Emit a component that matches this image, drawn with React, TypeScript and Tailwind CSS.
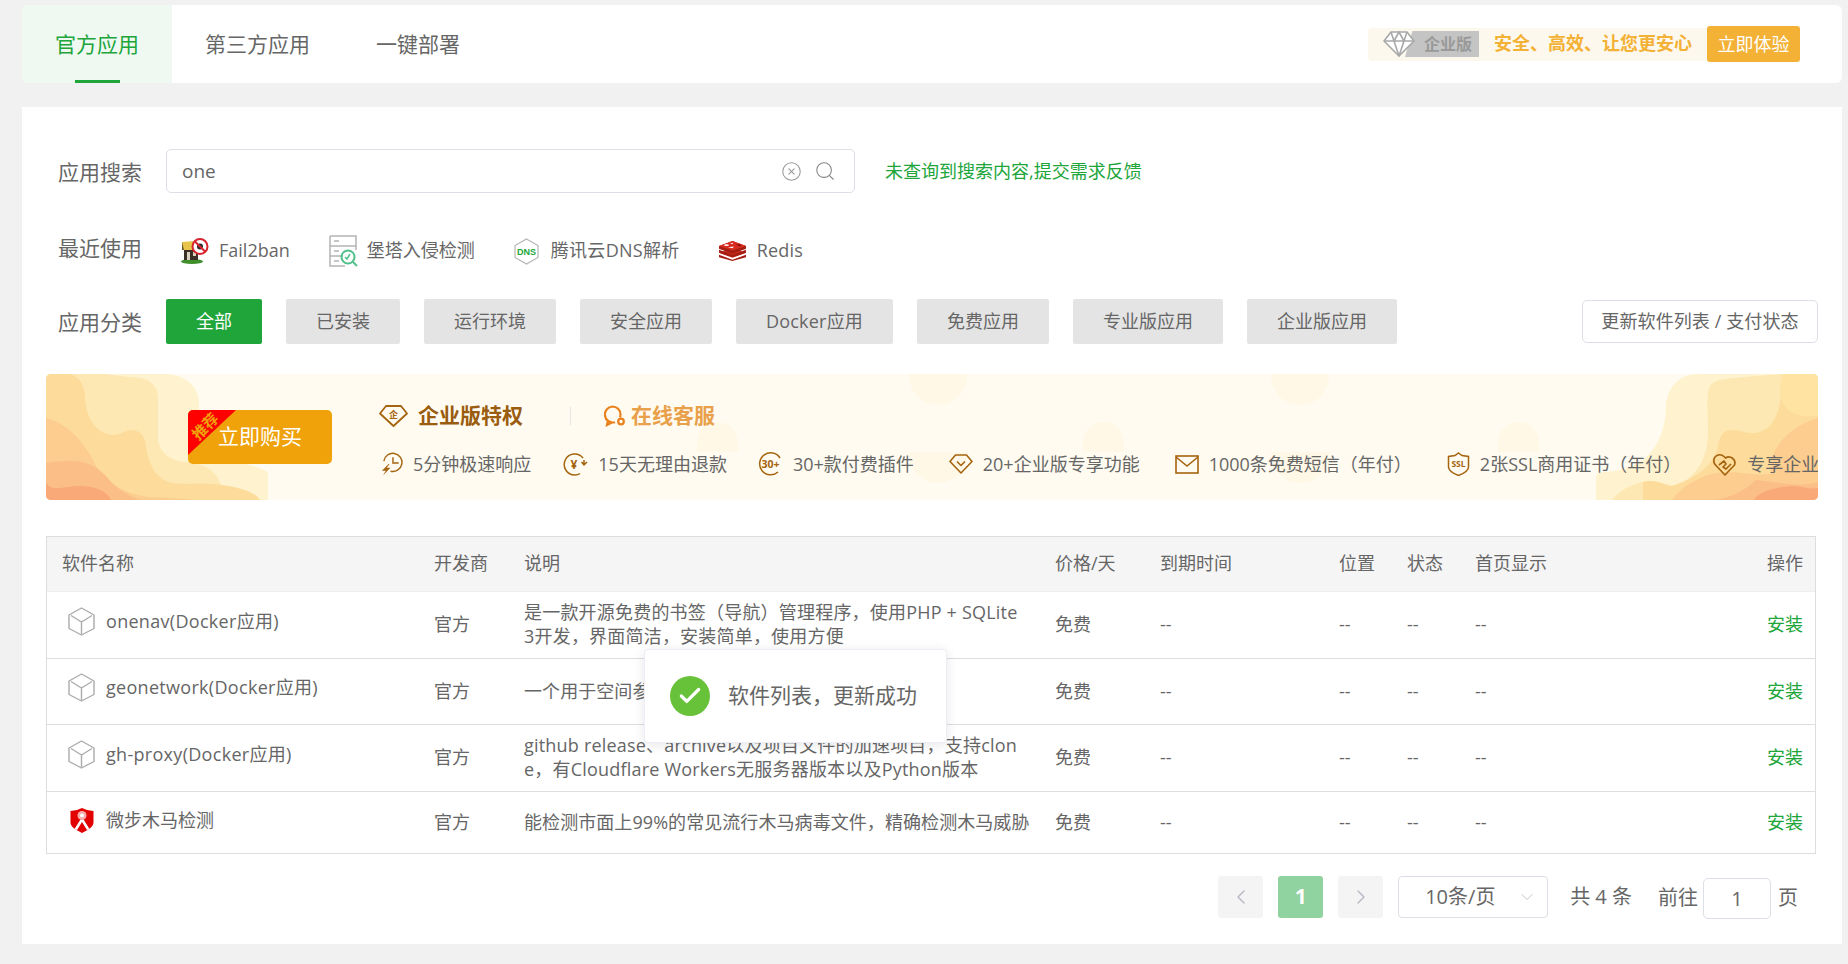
import { CircleX, Search, ChevronLeft, ChevronRight, ChevronDown, Check } from "lucide-react";

const categories = ["已安装", "运行环境", "安全应用", "Docker应用", "免费应用", "专业版应用", "企业版应用"];

const rows = [
  {
    name: "onenav(Docker应用)",
    desc: ["是一款开源免费的书签（导航）管理程序，使用PHP + SQLite", "3开发，界面简洁，安装简单，使用方便"],
    h: "h-[67px]",
  },
  {
    name: "geonetwork(Docker应用)",
    desc: ["一个用于空间参考信息管理的开源地理信息目录系统"],
    h: "h-[66px]",
  },
  {
    name: "gh-proxy(Docker应用)",
    desc: ["github release、archive以及项目文件的加速项目，支持clon", "e，有Cloudflare Workers无服务器版本以及Python版本"],
    h: "h-[67px]",
  },
  {
    name: "微步木马检测",
    desc: ["能检测市面上99%的常见流行木马病毒文件，精确检测木马威胁"],
    h: "h-[62px]",
    red: true,
  },
];

const headers = [
  { t: "软件名称", w: "w-[372px]" },
  { t: "开发商", w: "w-[90px]" },
  { t: "说明", w: "w-[531px]" },
  { t: "价格/天", w: "w-[105px]" },
  { t: "到期时间", w: "w-[179px]" },
  { t: "位置", w: "w-[68px]" },
  { t: "状态", w: "w-[68px]" },
  { t: "首页显示", w: "" },
];

function Cube() {
  return (
    <svg width="27" height="29" viewBox="0 0 27 29" fill="none" stroke="#ababab" strokeWidth="1.4" strokeLinejoin="round">
      <path d="M13.5 1 26 8v13.5L13.5 28 1 21.5V8z" />
      <path d="M3 8.5l10.5 6.5L24 8.5M13.5 15v12" />
    </svg>
  );
}

function RedShield() {
  return (
    <svg width="24" height="25" viewBox="0 0 24 25">
      <path d="M12 0l5 2 6.500 1v11c0 4-3 6-6 8l-5.500 3-5.500-3c-3-2-6-4-6-8V3l6.500-1z" fill="#e30000" />
      <path d="M12 9L4.500 21l2.500 1 5-8 5 8 2.500-1z" fill="#fff" />
      <circle cx="12" cy="7.500" r="4.500" fill="#f9a9a9" />
      <circle cx="12" cy="7.500" r="2" fill="#fff" />
    </svg>
  );
}

function FailIcon() {
  return (
    <svg width="28" height="26" viewBox="0 0 28 26">
      <ellipse cx="11" cy="23.500" rx="11" ry="2.500" fill="#3f8f2a" />
      <path d="M1 4l13-1 2 9H1z" fill="#e8c44a" />
      <path d="M1 4l2 8H1z" fill="#6d5a2a" />
      <rect x="3" y="12" width="14" height="10" fill="#3a3028" />
      <rect x="6" y="14" width="3" height="8" fill="#d8d2c0" />
      <rect x="12" y="14" width="3" height="4" fill="#d8d2c0" />
      <circle cx="19" cy="8.500" r="7.500" fill="#fff" stroke="#d9232e" strokeWidth="2" />
      <circle cx="19" cy="8.500" r="3" fill="#2a2a2a" />
      <path d="M14 3.500l10 10" stroke="#d9232e" strokeWidth="2" />
    </svg>
  );
}

function MonitorIcon() {
  return (
    <svg width="29" height="32" viewBox="0 0 29 32" fill="none">
      <path d="M1 1h26v14M1 1v30h15" stroke="#b4b4b4" strokeWidth="1.500" />
      <path d="M1 11h26M1 21h13" stroke="#b4b4b4" strokeWidth="1.500" />
      <path d="M5 6h5M5 16h5M5 26h5" stroke="#b4b4b4" strokeWidth="1.500" />
      <circle cx="19" cy="22" r="6.500" stroke="#52c08a" strokeWidth="2" />
      <path d="M24 27l4 4" stroke="#52c08a" strokeWidth="2" />
      <path d="M16 22l2 2 3-5" stroke="#52c08a" strokeWidth="1.500" />
    </svg>
  );
}

function DnsIcon() {
  return (
    <svg width="25" height="27" viewBox="0 0 25 27" fill="none">
      <path d="M12.500 1L24 7.500v12L12.500 26 1 19.500v-12z" stroke="#b5b5b5" strokeWidth="1.200" />
      <text x="12.500" y="16.500" textAnchor="middle" fontSize="9" fontWeight="700" fill="#20a53a" fontFamily="Liberation Sans, sans-serif">
        DNS
      </text>
    </svg>
  );
}

function RedisIcon() {
  return (
    <svg width="27" height="20" viewBox="0 0 27 22" preserveAspectRatio="none">
      <path d="M0 15l13.500 5.500L27 15v3l-13.500 4L0 18z" fill="#a41e11" />
      <path d="M0 13l13.500-5L27 13l-13.500 5.500z" fill="#d82c20" />
      <path d="M0 9.500l13.500 5.500L27 9.500v3.500l-13.500 5L0 13z" fill="#a41e11" />
      <path d="M0 8l13.500-5L27 8l-13.500 5.500z" fill="#d82c20" />
      <path d="M0 5.500L13.500 0 27 5.500v3l-13.500 5.500L0 8.500z" fill="#a41e11" />
      <path d="M0 5.500L13.500 0 27 5.500 13.500 10.500z" fill="#d82c20" />
      <path d="M11 2.500l3-.5-.5 1.500zM9 7l6-1-1.500 2z" fill="#fff" />
      <ellipse cx="7.500" cy="4.500" rx="2.500" ry="1" fill="#fff" />
      <path d="M17 4l4.500-.5v2.500z" fill="#7a0c00" />
    </svg>
  );
}

function GrayDiamond() {
  return (
    <svg width="32" height="26" viewBox="0 0 32 26" fill="none" stroke="#a8a8a8" strokeWidth="1.600" strokeLinejoin="round">
      <path d="M8 1h16l7 9-15 15L1 10z" fill="#fff" />
      <path d="M1 10h30M8 1l3 9 5 15 5-15 3-9M11 10l5-9 5 9" />
    </svg>
  );
}

const iconBrown = "#a5640f";

function GemTitleIcon() {
  return (
    <svg width="29" height="22" viewBox="0 0 29 22" fill="none" stroke={iconBrown} strokeWidth="1.800" strokeLinejoin="round">
      <path d="M7 1h15l6 7.500L14.500 21 1 8.500z" />
      <text x="14.500" y="12.500" textAnchor="middle" fontSize="9" fontWeight="700" stroke="none" fill={iconBrown}>
        企
      </text>
    </svg>
  );
}

function ServiceIcon() {
  return (
    <svg width="23" height="22" viewBox="0 0 23 22" fill="none" stroke="#e8821e" strokeWidth="2.200">
      <path d="M9.500 1.500a8 8 0 0 1 8 8c0 1-.2 2-.5 2.800M12 17.200a8 8 0 1 1-2.500-15.700M5 15l-1 5 5-2.500" />
      <circle cx="18" cy="16.500" r="2.800" />
    </svg>
  );
}

const featureIcons = [
  <svg key="a" width="23" height="26" viewBox="0 0 24 26" fill="none" stroke={iconBrown} strokeWidth="1.500">
    <path d="M4 10a9.500 9.500 0 1 1 7 10.500" />
    <path d="M13.500 6v6h6" />
    <path d="M9 13l-7 7h4l-3 5 8-8H7l3-4z" fill={iconBrown} stroke="none" />
  </svg>,
  <svg key="b" width="25" height="24" viewBox="0 0 25 24" fill="none" stroke={iconBrown} strokeWidth="1.500">
    <path d="M20 6A10.500 10.500 0 1 0 12 23c2 0 3.500-.5 5-1.500M21 8v5M24 10l-3 3-2.500-3" />
    <text x="11" y="16.500" textAnchor="middle" fontSize="12" fontWeight="700" stroke="none" fill={iconBrown}>
      ¥
    </text>
  </svg>,
  <svg key="c" width="25" height="24" viewBox="0 0 25 24" fill="none" stroke={iconBrown} strokeWidth="1.500">
    <path d="M22 6A11 11 0 1 0 20 20" />
    <text x="12.500" y="15.500" textAnchor="middle" fontSize="10.500" fontWeight="700" stroke="none" fill={iconBrown}>
      30+
    </text>
  </svg>,
  <svg key="d" width="24" height="20" viewBox="0 0 24 20" fill="none" stroke={iconBrown} strokeWidth="1.600" strokeLinejoin="round">
    <path d="M6.500 1h11L23 7.500 12 19 1 7.500z" />
    <path d="M8 7.500l4 4 4-4" />
  </svg>,
  <svg key="e" width="24" height="19" viewBox="0 0 24 19" fill="none" stroke={iconBrown} strokeWidth="1.600">
    <rect x="1" y="1" width="22" height="17" />
    <path d="M1 2l11 9L23 2" />
  </svg>,
  <svg key="f" width="23" height="24" viewBox="0 0 23 24" fill="none" stroke={iconBrown} strokeWidth="1.500">
    <path d="M11.500 1L15 3.500l6.500 1V15c0 4-5 6.500-10 8.500C6.500 21.500 1.500 19 1.500 15V4.500l6.500-1z" />
    <text x="11.500" y="15" textAnchor="middle" fontSize="8.500" fontWeight="700" stroke="none" fill={iconBrown}>
      SSL
    </text>
  </svg>,
  <svg key="g" width="24" height="23" viewBox="0 0 24 23" fill="none" stroke={iconBrown} strokeWidth="1.700" strokeLinejoin="round">
    <path d="M12 22L2.500 12A6 6 0 0 1 11 3.500l1.500 1.500A6 6 0 0 1 21.500 12z" />
    <path d="M6 12l5-4 2 3-3 3 3 2 5-5" />
  </svg>,
];

const features = [
  { t: "5分钟极速响应", m: "ml-px" },
  { t: "15天无理由退款", m: "ml-[32px]" },
  { t: "30+款付费插件", m: "ml-[31px]" },
  { t: "20+企业版专享功能", m: "ml-[35px]" },
  { t: "1000条免费短信（年付）", m: "ml-[35px]" },
  { t: "2张SSL商用证书（年付）", m: "ml-[35px]" },
  { t: "专享企业服务群", m: "ml-[32px]" },
];

function WaveLeft() {
  return (
    <svg className="absolute left-0 top-0" width="222" height="126" viewBox="0 0 222 126">
      <path d="M0 0H122C142 2 153 14 153 29V70C165 85 205 88 222 98V126H0z" fill="#fff3cf" />
      <path d="M0 0H60C80 4 99 2 104 8C112 14 112 20 112 30V66C114 80 126 88 142 88C165 92 176 100 177 126H0z" fill="#fde7b2" />
      <path d="M0 0H24C36 4 39 14 39 26C40 40 48 60 67 61C76 61 78 56 86 56C95 57 99 62 100 72C102 88 108 102 122 108C135 112 150 108 168 110C190 112 210 118 214 126H0z" fill="#fddb9a" />
      <path d="M0 44C20 48 38 68 47 86C55 104 75 120 103 123C120 124 135 124 146 126H0z" fill="#fccd8e" />
      <path d="M0 89C12 87 25 86 36 88C46 90 54 96 60 102C68 112 80 122 95 126H0z" fill="#fbbe86" />
      <path d="M0 109C4 116 14 114 22 113C40 110 60 114 65 126H0z" fill="#f9a877" />
    </svg>
  );
}

function WaveRight() {
  return (
    <svg className="absolute right-0 top-0" width="222" height="126" viewBox="0 0 222 126">
      <path d="M0 126V104C0 100 4 98 8 98C50 96 70 70 70 30C72 12 85 0 101 0H222V126z" fill="#fff3cf" />
      <path d="M16 126C24 116 36 110 47 108C60 104 70 112 82 112C100 100 111 88 112 60C112 40 110 20 114 12C118 5 130 5 148 3L187 0H222V126z" fill="#fde7b2" />
      <path d="M47 126V108C60 104 68 112 76 112C100 104 118 92 122 72C124 60 128 56 136 56C145 56 150 60 160 59C176 56 184 40 185 20C186 8 192 2 198 0H222V126z" fill="#fddb9a" />
      <path d="M76 126C86 112 104 102 120 99C140 96 160 102 175 100C172 80 186 55 222 44V126z" fill="#fccd8e" />
      <path d="M117 126C135 124 150 116 160 106C180 108 205 114 222 108V126z" fill="#fbbe86" />
      <path d="M158 126C162 118 180 113 196 112C206 112 214 116 222 114V126z" fill="#f9a877" />
      <path d="M180 0H222V42C205 44 190 40 185 25C183 16 184 6 187 0z" fill="#fee3a2" />
    </svg>
  );
}

// 横幅背景里的淡色圆点
function Blobs() {
  return (
    <>
      <div className="absolute left-[651px] top-[48px] h-[30px] w-[41px] rounded-t-full bg-[#fff8e6]" />
      <div className="absolute left-[863px] top-0 h-[31px] w-[58px] rounded-b-full bg-[#fff8e6]" />
      <div className="absolute left-[863px] top-[78px] h-[31px] w-[58px] rounded-b-full bg-[#fff8e6]" />
      <div className="absolute left-[1037px] top-[48px] h-[30px] w-[41px] rounded-t-full bg-[#fff8e6]" />
      <div className="absolute left-[1225px] top-0 h-[31px] w-[58px] rounded-b-full bg-[#fff8e6]" />
      <div className="absolute left-[1225px] top-[78px] h-[31px] w-[58px] rounded-b-full bg-[#fff8e6]" />
      <div className="absolute left-[1452px] top-[48px] h-[30px] w-[41px] rounded-t-full bg-[#fff8e6]" />
    </>
  );
}

export default function App() {
  return (
    <div className="h-[964px] overflow-hidden bg-[#f1f1f1] pl-[22px] pr-[6px] pt-[5px] text-[18px] text-[#666] [font-family:'Open_Sans','Noto_Sans_CJK_SC',sans-serif]">
      {/* 顶部标签 */}
      <div className="flex h-[78px] items-center justify-between rounded-md bg-white pr-[42px]">
        <div className="flex h-full text-[21px]">
          <div className="relative flex items-center rounded-l-md bg-[#eff9f2] px-[33px] pt-[2px] text-[#20a53a]">
            官方应用
            <div className="absolute bottom-0 left-[53px] h-[3px] w-[45px] bg-[#20a53a]" />
          </div>
          <div className="flex items-center px-[33px] pt-[2px]">第三方应用</div>
          <div className="flex items-center px-[33px] pt-[2px]">一键部署</div>
        </div>
        <div className="flex items-center">
          <div className="flex h-[33px] items-center rounded-l bg-[#fdf8ee] pl-[15px] pr-[15px]">
            <div className="relative z-10 flex">
              <GrayDiamond />
            </div>
            <div className="-ml-[10px] flex h-[26px] w-[74px] items-center justify-end bg-[#c4c4c4] pr-[7px] text-[16px] font-bold leading-none text-[#999] [clip-path:polygon(10%_0,100%_0,100%_100%,0_100%)]">
              企业版
            </div>
            <span className="mb-[2px] ml-[15px] font-bold text-[#f3b135]">安全、高效、让您更安心</span>
          </div>
          <div className="flex h-[36px] w-[93px] items-center justify-center rounded-[3px] bg-[#f3b135] text-white">立即体验</div>
        </div>
      </div>

      <div className="relative mt-[24px] h-[837px] bg-white px-[24px] pt-[42px]">
        {/* 搜索 */}
        <div className="flex items-center pl-[12px]">
          <div className="w-[108px] pt-[3px] text-[21px]">应用搜索</div>
          <div className="flex h-[44px] w-[689px] items-center rounded-[5px] border border-[#dcdfe6] pl-[15px] pr-[18px]">
            <span className="flex-1 text-[19px]">one</span>
            <CircleX size={21} strokeWidth={1.2} color="#999" />
            <Search size={22} strokeWidth={1.2} color="#888" className="ml-[12px]" />
          </div>
          <span className="ml-[30px] text-[#20a53a]">未查询到搜索内容,提交需求反馈</span>
        </div>

        {/* 最近使用 */}
        <div className="mt-[42px] flex h-[32px] items-center pl-[12px]">
          <div className="-mt-[5px] w-[108px] text-[21px]">最近使用</div>
          <div className="ml-[15px] flex items-center gap-[39px]">
            <div className="flex items-center gap-[10px]">
              <FailIcon />
              <span className="-mt-px">Fail2ban</span>
            </div>
            <div className="flex items-center gap-[9px]">
              <MonitorIcon />
              <span className="-mt-px">堡塔入侵检测</span>
            </div>
            <div className="flex items-center gap-[12px]">
              <DnsIcon />
              <span className="-mt-px tracking-[0.3px]">腾讯云DNS解析</span>
            </div>
            <div className="flex items-center gap-[11px]">
              <RedisIcon />
              <span className="-mt-px tracking-[0.2px]">Redis</span>
            </div>
          </div>
        </div>

        {/* 应用分类 */}
        <div className="mt-[32px] flex h-[45px] items-center justify-between pl-[12px]">
          <div className="flex items-center">
            <div className="w-[108px] pt-[3px] text-[21px]">应用分类</div>
            <div className="flex gap-[24px]">
              <div className="flex h-[45px] items-center rounded-[2px] bg-[#20a53a] px-[30px] text-white">全部</div>
              {categories.map((c) => (
                <div
                  key={c}
                  className={`flex h-[45px] items-center rounded-[2px] bg-[#e4e4e4] px-[30px] ${c.startsWith("Docker") ? "tracking-[0.2px]" : ""}`}
                >
                  {c}
                </div>
              ))}
            </div>
          </div>
          <div className="flex h-[43px] w-[236px] items-center justify-center rounded-[5px] border border-[#dcdfe6] tracking-[0.1px]">
            更新软件列表 / 支付状态
          </div>
        </div>

        {/* 企业版横幅 */}
        <div className="relative mt-[30px] flex h-[126px] overflow-hidden rounded-[5px] bg-[#fffbf0]">
          <Blobs />
          <WaveLeft />
          <WaveRight />
          <div className="relative ml-[142px] mt-[36px] flex h-[54px] w-[144px] shrink-0 items-center justify-center overflow-hidden rounded-[5px] bg-[#f0a20a] text-[21px] text-white">
            立即购买
            <div className="absolute left-0 top-0 h-[45px] w-[48px] bg-[#fe0000] [clip-path:polygon(0_0,100%_0,0_100%)]" />
            <span className="absolute left-[2px] top-[5px] -rotate-[45deg] text-[15px] font-bold text-[#f0a20a]">推荐</span>
          </div>
          <div className="relative ml-[47px] mt-[31px] min-w-0 flex-1">
            <div className="flex h-[22px] items-center">
              <GemTitleIcon />
              <span className="ml-[10px] text-[21px] font-bold text-[#9a5c0e]">企业版特权</span>
              <div className="ml-[47px] h-[18px] w-px bg-[#e5e5e5]" />
              <div className="ml-[32px] flex">
                <ServiceIcon />
              </div>
              <span className="ml-[5px] text-[21px] font-bold text-[#e8a04a]">在线客服</span>
            </div>
            <div className="mt-[25px] flex h-[24px] items-center whitespace-nowrap">
              {features.map((f, i) => (
                <div key={f.t} className={`flex shrink-0 items-center gap-[10px] ${f.m}`}>
                  {featureIcons[i]}
                  <span>{f.t}</span>
                </div>
              ))}
            </div>
          </div>
        </div>

        {/* 软件列表 */}
        <div className="mr-[2px] mt-[36px] border border-[#ddd]">
          <table className="w-full table-fixed border-collapse">
            <thead>
              <tr className="h-[54px] border-b border-[#eee] bg-[#f5f5f5]">
                {headers.map((h) => (
                  <th key={h.t} className={`${h.w} pl-[15px] text-left font-normal`}>
                    {h.t}
                  </th>
                ))}
                <th className="w-[100px] pr-[12px] text-right font-normal">操作</th>
              </tr>
            </thead>
            <tbody>
              {rows.map((r, i) => (
                <tr key={r.name} className={`${r.h} ${i < 3 ? "border-b border-[#ddd]" : ""}`}>
                  <td className="pl-[21px]">
                    <div className={`flex items-center gap-[11px] ${r.red ? "-mt-[3px]" : "-mt-[7px] tracking-[0.3px]"}`}>
                      {r.red ? (
                        <div className="ml-[2px] mr-px flex">
                          <RedShield />
                        </div>
                      ) : (
                        <Cube />
                      )}
                      <span>{r.name}</span>
                    </div>
                  </td>
                  <td className="pl-[15px]">官方</td>
                  <td className="whitespace-nowrap pl-[15px] leading-[24px]">
                    <div className={r.desc.length > 1 ? "-mt-[1px] tracking-[0.2px]" : "tracking-[0.07px]"}>
                      {r.desc.map((d) => (
                        <div key={d}>{d}</div>
                      ))}
                    </div>
                  </td>
                  <td className="pl-[15px]">免费</td>
                  <td className="pl-[15px]">--</td>
                  <td className="pl-[15px]">--</td>
                  <td className="pl-[15px]">--</td>
                  <td className="pl-[15px]">--</td>
                  <td className="pr-[12px] text-right text-[#20a53a]">安装</td>
                </tr>
              ))}
            </tbody>
          </table>
        </div>

        {/* 分页 */}
        <div className="mt-[22px] flex items-start justify-end pr-[20px]">
          <div className="flex h-[42px] w-[45px] items-center justify-center rounded-[3px] bg-[#f4f4f5] text-[#b8bcc4]">
            <ChevronLeft size={24} strokeWidth={1.5} />
          </div>
          <div className="ml-[15px] flex h-[42px] w-[45px] items-center justify-center rounded-[3px] bg-[#90d2a0] text-[21px] font-bold text-white">
            1
          </div>
          <div className="ml-[15px] flex h-[42px] w-[45px] items-center justify-center rounded-[3px] bg-[#f4f4f5] text-[#b8bcc4]">
            <ChevronRight size={24} strokeWidth={1.5} />
          </div>
          <div className="ml-[15px] flex h-[42px] w-[150px] items-center rounded-[4px] border border-[#dcdfe6] pl-[26px] pr-[10px] text-[20px]">
            <span className="flex-1">10条/页</span>
            <ChevronDown size={20} strokeWidth={1} color="#b5b8bf" />
          </div>
          <span className="ml-[22px] h-[42px] text-[20px] leading-[42px]">共 4 条</span>
          <span className="ml-[26px] h-[42px] text-[20px] leading-[44px]">前往</span>
          <div className="ml-[5px] mt-[2px] flex h-[41px] w-[68px] items-center justify-center rounded-[5px] border border-[#dcdfe6] text-[20px]">
            1
          </div>
          <span className="ml-[7px] h-[42px] text-[20px] leading-[44px]">页</span>
        </div>

        {/* 提示 */}
        <div className="absolute left-[622px] top-[542px] flex h-[94px] w-[303px] items-center rounded-[4px] border border-[#ebeef5] bg-white pl-[25px] shadow-[0_2px_12px_rgba(0,0,0,0.1)]">
          <div className="flex h-[40px] w-[40px] items-center justify-center rounded-full bg-[#67c23a]">
            <Check size={26} strokeWidth={3} color="#fff" />
          </div>
          <span className="ml-[18px] text-[21px]">软件列表，更新成功</span>
        </div>
      </div>
    </div>
  );
}
